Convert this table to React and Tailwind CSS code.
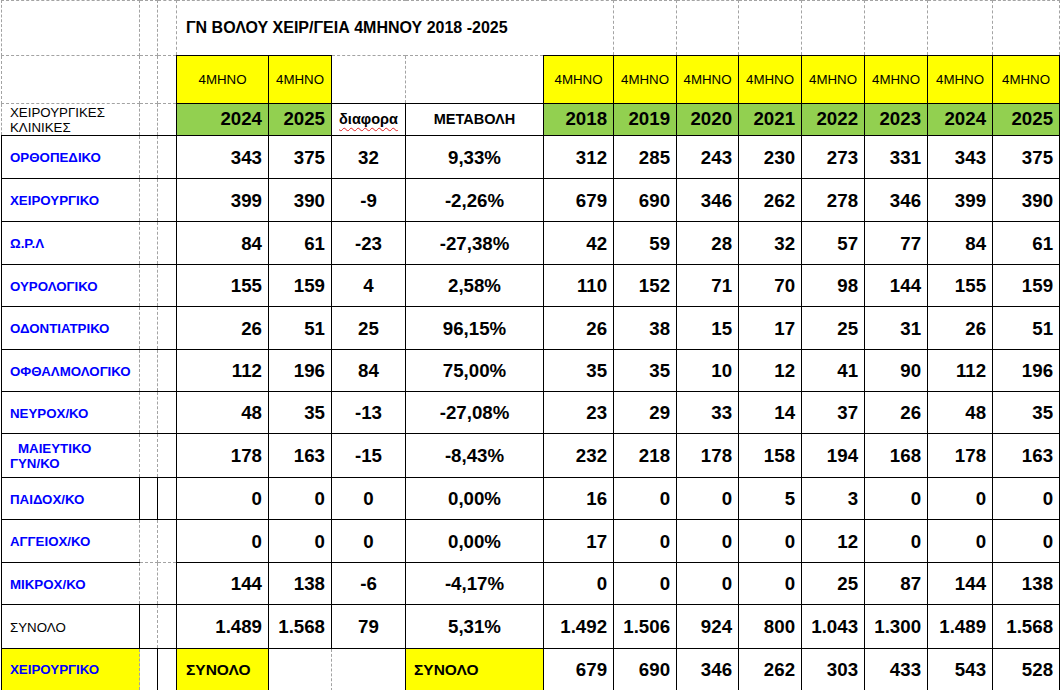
import React from 'react';

const SIDE = {
  t: ['[border-top:1px_dashed_#a3a3a3]', '[border-top:1px_solid_#000]'],
  r: ['[border-right:1px_dashed_#a3a3a3]', '[border-right:1px_solid_#000]'],
  b: ['[border-bottom:1px_dashed_#a3a3a3]', '[border-bottom:1px_solid_#000]'],
  l: ['[border-left:1px_dashed_#a3a3a3]', '[border-left:1px_solid_#000]'],
};

// solid = which sides are drawn as black lines, the rest keep the sheet grid
function edge(solid = '') {
  return ['t', 'r', 'b', 'l'].map((s) => SIDE[s][solid.includes(s) ? 1 : 0]).join(' ');
}

const COLS = [138, 18, 19, 92, 63, 74, 138, 70, 63, 62, 63, 63, 63, 65, 67];
const HEIGHTS = [43, 43, 43, 42, 43, 42, 42, 44, 42, 43, 42, 44];

const ROWS = [
  ['ΟΡΘΟΠΕΔΙΚΟ', '343', '375', '32', '9,33%', '312', '285', '243', '230', '273', '331', '343', '375'],
  ['ΧΕΙΡΟΥΡΓΙΚΟ', '399', '390', '-9', '-2,26%', '679', '690', '346', '262', '278', '346', '399', '390'],
  ['Ω.Ρ.Λ', '84', '61', '-23', '-27,38%', '42', '59', '28', '32', '57', '77', '84', '61'],
  ['ΟΥΡΟΛΟΓΙΚΟ', '155', '159', '4', '2,58%', '110', '152', '71', '70', '98', '144', '155', '159'],
  ['ΟΔΟΝΤΙΑΤΡΙΚΟ', '26', '51', '25', '96,15%', '26', '38', '15', '17', '25', '31', '26', '51'],
  ['ΟΦΘΑΛΜΟΛΟΓΙΚΟ', '112', '196', '84', '75,00%', '35', '35', '10', '12', '41', '90', '112', '196'],
  ['ΝΕΥΡΟΧ/ΚΟ', '48', '35', '-13', '-27,08%', '23', '29', '33', '14', '37', '26', '48', '35'],
  ['ΜΑΙΕΥΤΙΚΟ|ΓΥΝ/ΚΟ', '178', '163', '-15', '-8,43%', '232', '218', '178', '158', '194', '168', '178', '163'],
  ['ΠΑΙΔΟΧ/ΚΟ', '0', '0', '0', '0,00%', '16', '0', '0', '5', '3', '0', '0', '0'],
  ['ΑΓΓΕΙΟΧ/ΚΟ', '0', '0', '0', '0,00%', '17', '0', '0', '0', '12', '0', '0', '0'],
  ['ΜΙΚΡΟΧ/ΚΟ', '144', '138', '-6', '-4,17%', '0', '0', '0', '0', '25', '87', '144', '138'],
  ['ΣΥΝΟΛΟ', '1.489', '1.568', '79', '5,31%', '1.492', '1.506', '924', '800', '1.043', '1.300', '1.489', '1.568'],
];

const YEARS = ['2018', '2019', '2020', '2021', '2022', '2023', '2024', '2025'];
const LAST = ['679', '690', '346', '262', '303', '433', '543', '528'];

const num = 'text-[18.7px] font-bold text-black';

function Label({ text, total }) {
  if (total) return <span className="text-[13.3px] text-black">{text}</span>;
  if (text.includes('|')) {
    const [a, b] = text.split('|');
    return (
      <span className="block text-[13.3px] font-bold leading-[15px] text-[#0000ff]">
        <span className="block pl-[8px]">{a}</span>
        <span className="block">{b}</span>
      </span>
    );
  }
  return <span className="text-[13.3px] font-bold text-[#0000ff]">{text}</span>;
}

export default function App() {
  return (
    <div className="w-[1061px] h-[690px] overflow-hidden bg-white font-['Liberation_Sans',Arial,sans-serif]">
      <table className="ml-px table-fixed border-collapse w-[1058px]">
        <colgroup>
          {COLS.map((w, i) => (
            <col key={i} style={{ width: w }} />
          ))}
        </colgroup>
        <tbody>
          {/* title */}
          <tr className="h-[55px]">
            <td className={edge('')} />
            <td className={edge('')} />
            <td className={edge('')} />
            <td colSpan={5} className={`${edge('')} pl-[9px] text-[16px] font-bold text-black align-middle`}>
              ΓΝ ΒΟΛΟΥ ΧΕΙΡ/ΓΕΙΑ 4ΜΗΝΟΥ 2018 -2025
            </td>
            {YEARS.slice(1).map((y) => (
              <td key={y} className={edge('')} />
            ))}
          </tr>

          {/* period row */}
          <tr className="h-[48px]">
            <td className={edge('')} />
            <td className={edge('')} />
            <td className={edge('')} />
            <td className={`${edge('trbl')} bg-[#ffff00] text-center text-[13.3px] text-black`}>4ΜΗΝΟ</td>
            <td className={`${edge('trbl')} bg-[#ffff00] text-center text-[13.3px] text-black`}>4ΜΗΝΟ</td>
            <td className={edge('')} />
            <td className={edge('')} />
            {YEARS.map((y) => (
              <td key={y} className={`${edge('trbl')} bg-[#ffff00] text-center text-[13.3px] text-black`}>
                4ΜΗΝΟ
              </td>
            ))}
          </tr>

          {/* years row */}
          <tr className="h-[32px]">
            <td className={`${edge('b')} pl-[8px] text-[13.3px] leading-[15px] text-black`}>
              ΧΕΙΡΟΥΡΓΙΚΕΣ
              <br />
              ΚΛΙΝΙΚΕΣ
            </td>
            <td className={edge('b')} />
            <td className={edge('b')} />
            <td className={`${edge('trbl')} bg-[#92d050] pr-[6px] text-right ${num}`}>2024</td>
            <td className={`${edge('trbl')} bg-[#92d050] pr-[6px] text-right ${num}`}>2025</td>
            <td className={`${edge('trbl')} text-center text-[14.5px] font-bold text-black`}>
              <span className="underline decoration-wavy decoration-[#e02020] decoration-1 underline-offset-[3px]">διαφορα</span>
            </td>
            <td className={`${edge('trbl')} text-center text-[14.5px] font-bold text-black`}>ΜΕΤΑΒΟΛΗ</td>
            {YEARS.map((y) => (
              <td key={y} className={`${edge('trbl')} bg-[#92d050] pr-[6px] text-right ${num}`}>
                {y}
              </td>
            ))}
          </tr>

          {ROWS.map((r, i) => {
            const total = i === 11;
            const c0 = i === 8 || i === 11 ? 'trbl' : 'tbl';
            const top = i === 10 ? '' : 't';
            const bot = i === 9 ? '' : 'b';
            const c1 = top + bot + (i === 8 ? 'r' : '');
            const c2 = top + bot + 'r';
            return (
              <tr key={r[0]} style={{ height: HEIGHTS[i] }}>
                <td className={`${edge(c0)} pl-[8px] align-middle`}>
                  <Label text={r[0]} total={total} />
                </td>
                <td className={edge(c1)} />
                <td className={edge(c2)} />
                <td className={`${edge('trbl')} pr-[6px] pt-[2px] text-right ${num}`}>{r[1]}</td>
                <td className={`${edge('trbl')} pr-[6px] pt-[2px] text-right ${num}`}>{r[2]}</td>
                <td className={`${edge('trbl')} pt-[2px] text-center ${num}`}>{r[3]}</td>
                <td className={`${edge('trbl')} pt-[2px] text-center ${num}`}>{r[4]}</td>
                {r.slice(5).map((v, j) => (
                  <td key={j} className={`${edge('trbl')} pr-[6px] pt-[2px] text-right ${num}`}>
                    {v}
                  </td>
                ))}
              </tr>
            );
          })}

          {/* last summary row */}
          <tr className="h-[42px]">
            <td className={`${edge('tbl')} bg-[#ffff00] pl-[8px] text-[13.3px] font-bold text-[#0000ff]`}>ΧΕΙΡΟΥΡΓΙΚΟ</td>
            <td className={edge('tbr')} />
            <td className={edge('tbr')} />
            <td className={`${edge('trbl')} bg-[#ffff00] pl-[9px] text-[15.5px] font-bold text-black`}>ΣΥΝΟΛΟ</td>
            <td className={edge('t')} />
            <td className={edge('t')} />
            <td className={`${edge('trbl')} bg-[#ffff00] pl-[8px] text-[15.5px] font-bold text-black`}>ΣΥΝΟΛΟ</td>
            {LAST.map((v, j) => (
              <td key={j} className={`${edge('trbl')} pr-[6px] pt-[2px] text-right ${num}`}>
                {v}
              </td>
            ))}
          </tr>
        </tbody>
      </table>
    </div>
  );
}
